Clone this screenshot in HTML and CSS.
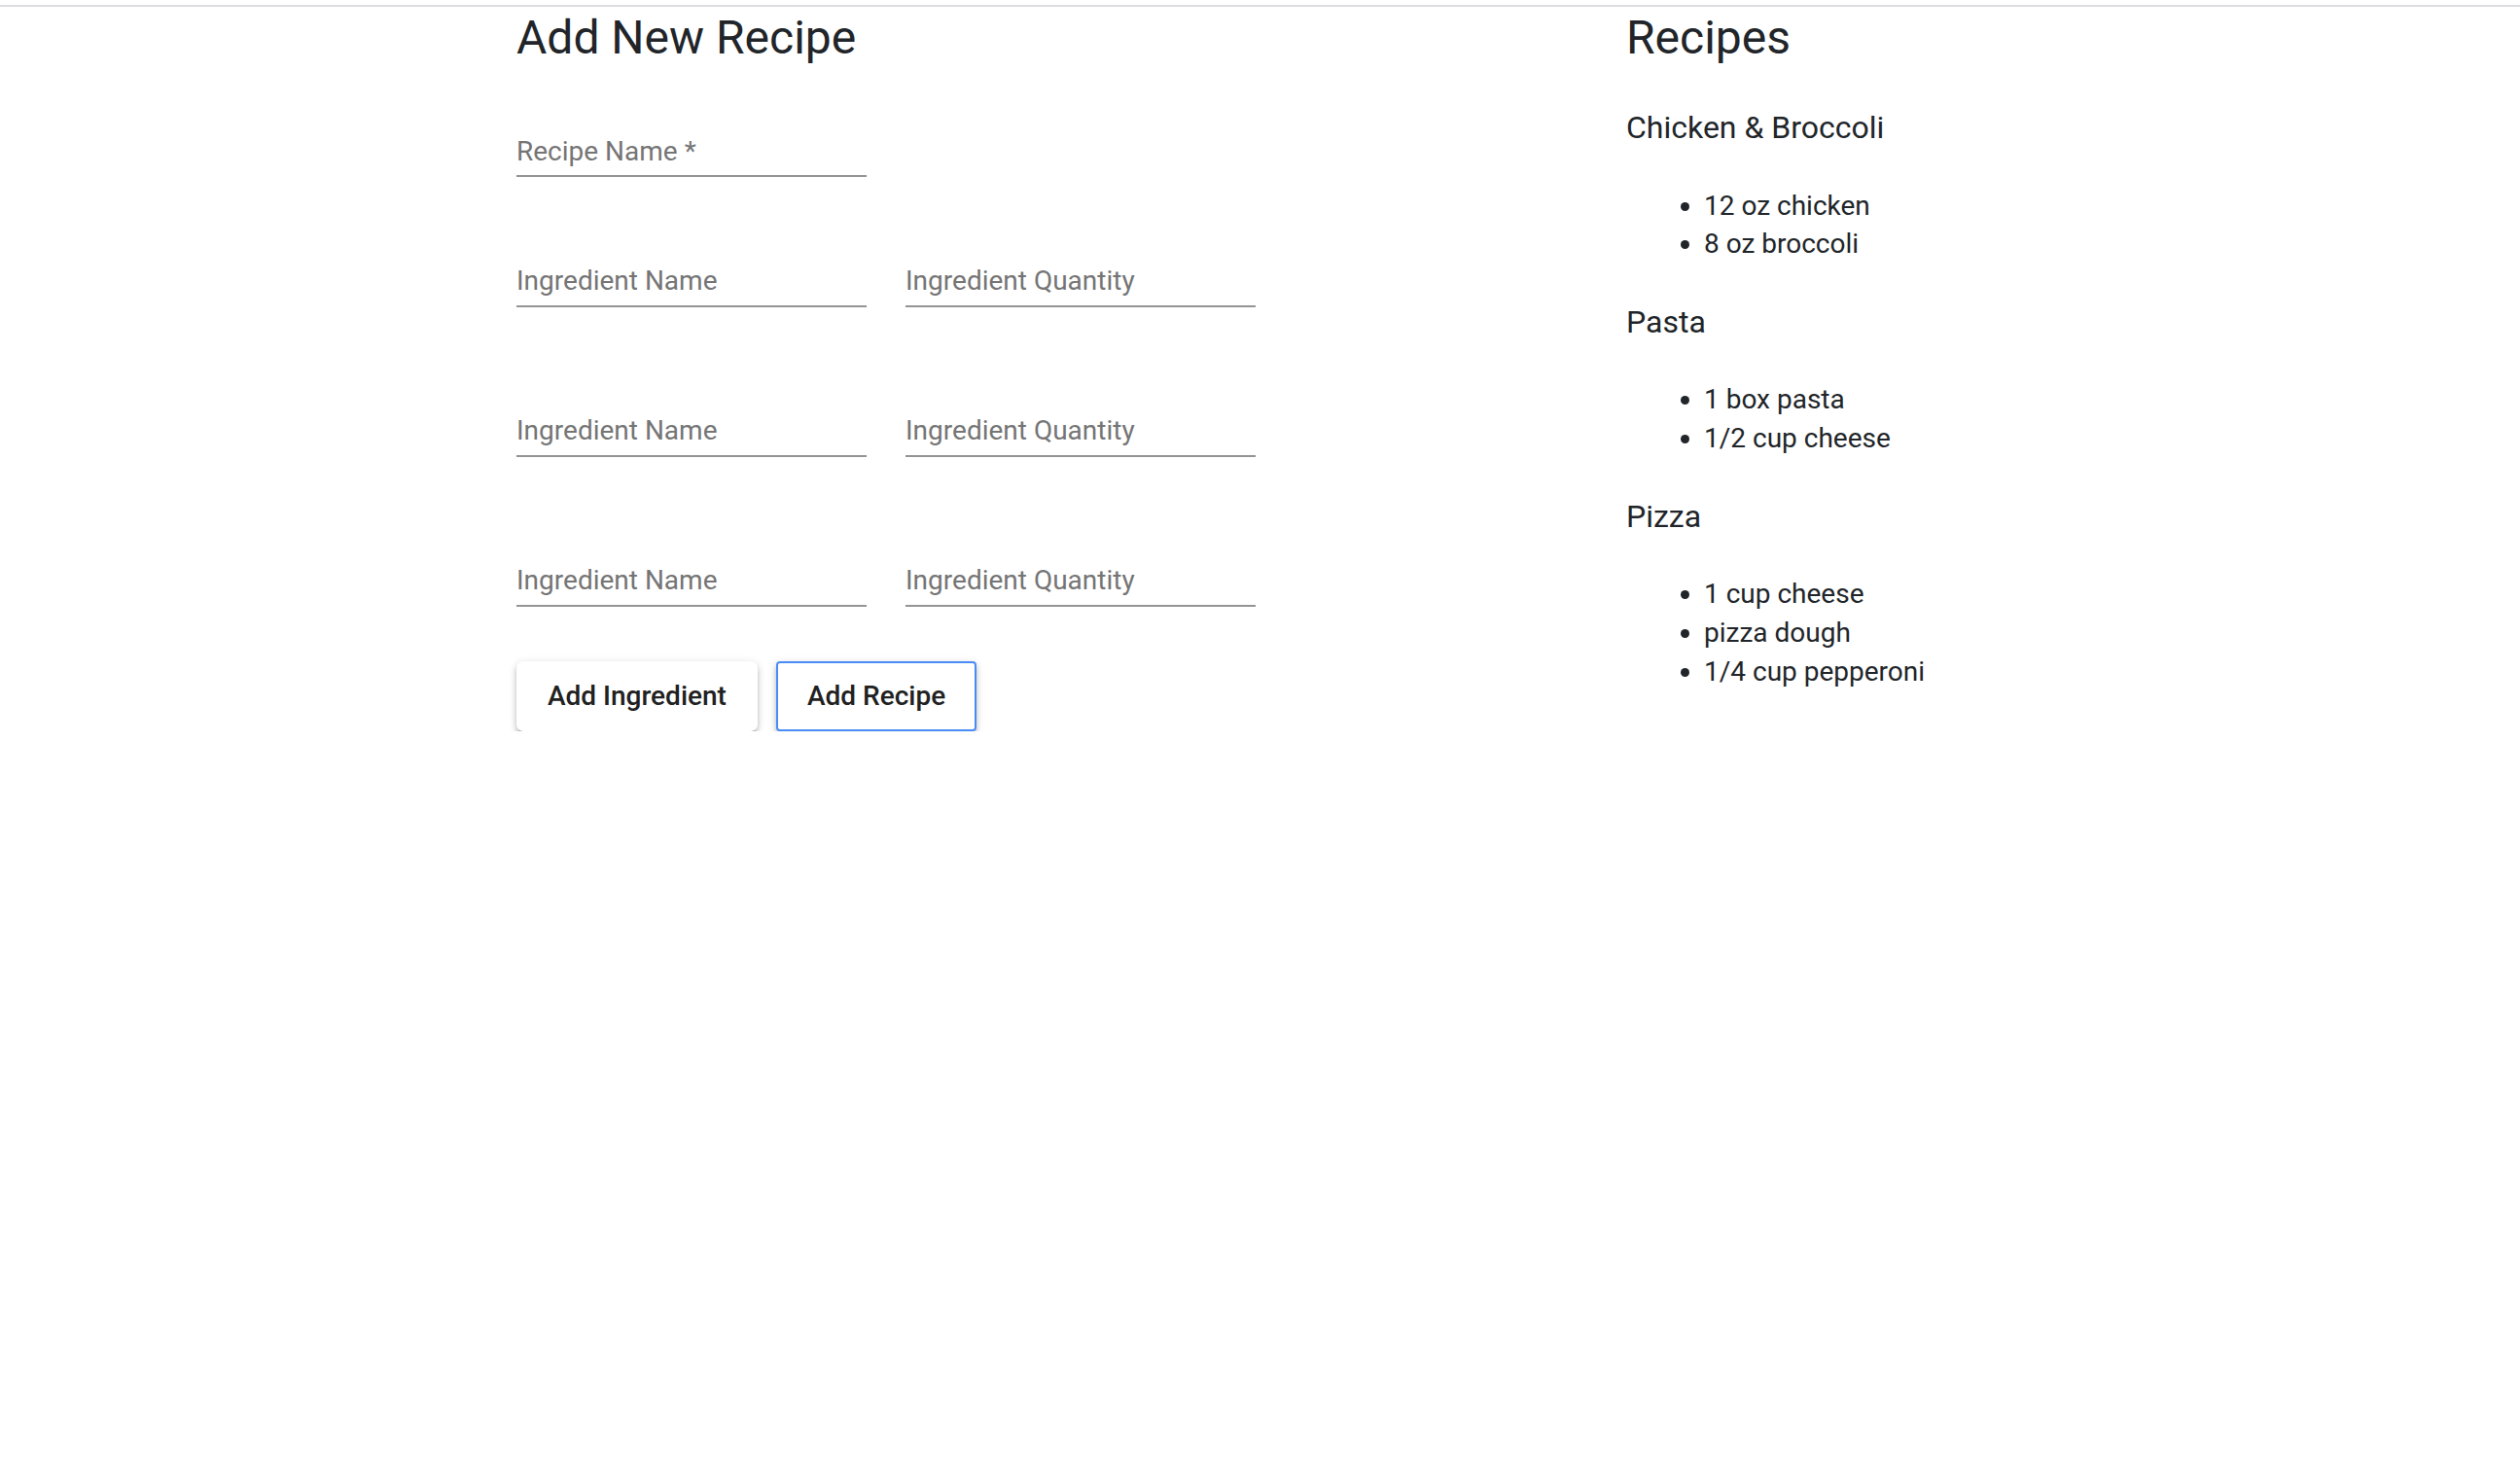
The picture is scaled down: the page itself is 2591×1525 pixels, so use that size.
FILE: index.html
```html
<!DOCTYPE html>
<html lang="en">
<head>
<meta charset="utf-8">
<title>Recipes</title>
<link rel="stylesheet" href="styles.css">
</head>
<body>
<div class="topline"></div>
<main class="page">
  <section class="form-col">
    <h1 class="title">Add New Recipe</h1>
    <div class="field field-recipe"><span class="placeholder">Recipe Name *</span></div>
    <div class="row row-first">
      <div class="field"><span class="placeholder">Ingredient Name</span></div>
      <div class="field"><span class="placeholder">Ingredient Quantity</span></div>
    </div>
    <div class="row">
      <div class="field"><span class="placeholder">Ingredient Name</span></div>
      <div class="field"><span class="placeholder">Ingredient Quantity</span></div>
    </div>
    <div class="row">
      <div class="field"><span class="placeholder">Ingredient Name</span></div>
      <div class="field"><span class="placeholder">Ingredient Quantity</span></div>
    </div>
    <div class="actions">
      <button class="btn" type="button">Add Ingredient</button>
      <button class="btn btn-focus" type="button">Add Recipe</button>
    </div>
  </section>
  <section class="list-col">
    <h1 class="title">Recipes</h1>
    <h3 class="recipe-name">Chicken &amp; Broccoli</h3>
    <ul class="ingredients">
      <li>12 oz chicken</li>
      <li>8 oz broccoli</li>
    </ul>
    <h3 class="recipe-name">Pasta</h3>
    <ul class="ingredients">
      <li>1 box pasta</li>
      <li>1/2 cup cheese</li>
    </ul>
    <h3 class="recipe-name">Pizza</h3>
    <ul class="ingredients">
      <li>1 cup cheese</li>
      <li>pizza dough</li>
      <li>1/4 cup pepperoni</li>
    </ul>
  </section>
</main>
</body>
</html>
```
FILE: styles.css
```css
html, body {
  margin: 0;
  padding: 0;
  background: #ffffff;
}
body {
  font-family: Roboto, "Noto Sans", "Liberation Sans", sans-serif;
  font-size: 28px;
  color: #212529;
}
.topline {
  margin-top: 5px;
  height: 2px;
  background: #dcdce0;
}
.page {
  display: grid;
  grid-template-columns: 1141px 1fr;
  padding-left: 531px;
  padding-top: 3px;
}
.title {
  margin: 0;
  font-size: 48px;
  font-weight: 400;
  line-height: 1.2;
}
.form-col {
  display: flex;
  flex-direction: column;
  align-items: flex-start;
}
.field {
  width: 360px;
  padding-bottom: 6.5px;
  border-bottom: 2px solid #949494;
  line-height: 39.2px;
}
.placeholder {
  color: #757575;
  font-size: 28px;
}
.field-recipe {
  margin-top: 68px;
  padding-bottom: 4.9px;
}
.row {
  display: flex;
  gap: 40px;
  margin-top: 106.3px;
}
.row-first {
  margin-top: 87.1px;
}
.actions {
  display: flex;
  gap: 19px;
  margin-top: 55.5px;
}
.btn {
  font-family: Roboto, "Noto Sans", "Liberation Sans", sans-serif;
  font-size: 28px;
  font-weight: 500;
  line-height: 49px;
  color: #212121;
  background: #ffffff;
  border: 0;
  border-radius: 7px;
  padding: 11.5px 32px;
  box-shadow: 0 5px 2px -3px rgba(0, 0, 0, 0.28), 0 4px 5px 0 rgba(0, 0, 0, 0.18), 0 2px 10px 0 rgba(0, 0, 0, 0.14);
  cursor: pointer;
}
.btn-focus {
  border: 2px solid #4a8cf7;
  border-radius: 4px;
  padding: 9.5px 30px;
}
.list-col {
  display: flex;
  flex-direction: column;
}
.recipe-name {
  margin: 41px 0 41px 0;
  font-size: 32px;
  font-weight: 400;
  line-height: 38.4px;
}
.list-col .title + .recipe-name {
  margin-top: 44.5px;
}
.ingredients {
  margin: 0;
  padding-left: 80px;
  line-height: 39.7px;
}
.ingredients + .recipe-name {
  margin-top: 41px;
}
```
